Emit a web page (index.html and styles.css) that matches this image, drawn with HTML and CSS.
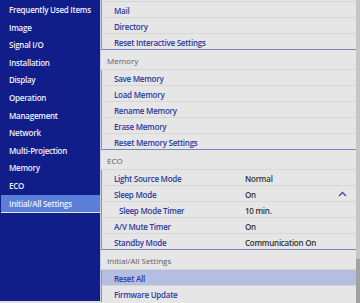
FILE: index.html
```html
<!DOCTYPE html>
<html lang="en">
<head>
  <meta charset="UTF-8">
  <title>Projector Menu</title>
  <link rel="stylesheet" href="styles.css">
</head>
<body>
<div class="menu">
  <div class="nav">
    <div class="nav-item">Frequently Used Items</div>
    <div class="nav-item">Image</div>
    <div class="nav-item">Signal I/O</div>
    <div class="nav-item">Installation</div>
    <div class="nav-item">Display</div>
    <div class="nav-item">Operation</div>
    <div class="nav-item">Management</div>
    <div class="nav-item">Network</div>
    <div class="nav-item">Multi-Projection</div>
    <div class="nav-item">Memory</div>
    <div class="nav-item">ECO</div>
    <div class="nav-item active">Initial/All Settings</div>
  </div>

  <div class="list">
    <div class="cut"></div>
    <div class="section">
      <div class="row">Mail</div>
      <div class="row">Directory</div>
      <div class="row">Reset Interactive Settings</div>
    </div>

    <div class="section">
      <div class="head">Memory</div>
      <div class="row">Save Memory</div>
      <div class="row">Load Memory</div>
      <div class="row">Rename Memory</div>
      <div class="row">Erase Memory</div>
      <div class="row">Reset Memory Settings</div>
    </div>

    <div class="section">
      <div class="head">ECO</div>
      <div class="row"><span class="label">Light Source Mode</span><span class="value">Normal</span></div>
      <div class="row"><span class="label">Sleep Mode</span><span class="value">On</span>
        <svg class="chev" width="9" height="6" viewBox="0 0 9 6"><path d="M1 5 L4.5 1.5 L8 5" fill="none" stroke="#3a4aa8" stroke-width="1.3"/></svg>
      </div>
      <div class="row sub"><span class="label">Sleep Mode Timer</span><span class="value">10 min.</span></div>
      <div class="row"><span class="label">A/V Mute Timer</span><span class="value">On</span></div>
      <div class="row"><span class="label">Standby Mode</span><span class="value">Communication On</span></div>
    </div>

    <div class="section last">
      <div class="head">Initial/All Settings</div>
      <div class="row selected">Reset All</div>
      <div class="row">Firmware Update</div>
    </div>
  </div>

  <div class="scroll">
    <div class="thumb"></div>
  </div>
</div>
</body>
</html>
```

FILE: styles.css
```css
body {
  margin: 0;
  background: #dcdcdc;
  font-family: "Open Sans", "Noto Sans", sans-serif;
  font-size: 8px;
  font-weight: 600;
  letter-spacing: -0.25px;
}

.menu {
  display: flex;
  width: 360px;
  height: 303px;
  overflow: hidden;
}

.nav {
  width: 100px;
  height: 301px;
  background: #111d88;
  border-right: 1px solid #c9cbe2;
}

.nav-item {
  height: 17.6px;
  line-height: 17.6px;
  padding-left: 9px;
  color: #eef0ff;
  white-space: nowrap;
}

.nav-item:first-child {
  margin-top: 1px;
}

.nav-item.active {
  background: #5a7fd6;
  border-bottom: 1px solid #e6e8f4;
  margin-left: 1px;
  padding-left: 8px;
}

.list {
  flex: 1;
  background: #e6e6e6;
}

.cut {
  height: 1px;
  border-bottom: 1px solid #d6d6d6;
  border-left: 1px solid #8a8fcb;
}

.section {
  border-bottom: 1px solid #7d82c2;
}

.section.last {
  border-bottom: none;
}

.head {
  height: 20px;
  line-height: 21px;
  padding-left: 6px;
  color: #5a5a5a;
  font-weight: 400;
  letter-spacing: 0;
  border-bottom: 1px solid #d6d6d6;
  box-sizing: border-box;
}

.row {
  display: flex;
  align-items: center;
  height: 16px;
  box-sizing: border-box;
  padding-left: 12px;
  padding-top: 1px;
  border-left: 1px solid #8a8fcb;
  border-bottom: 1px solid #d6d6d6;
  color: #2c3a9e;
  position: relative;
}

.section .row:last-child {
  border-bottom: none;
  height: 15px;
}

.section.last .row:last-child {
  height: 16px;
}

.row.sub {
  padding-left: 17px;
}

.row.sub .label {
  width: 126px;
}

.label {
  width: 131px;
}

.value {
  color: #333;
}

.row.selected {
  background: #b3bee1;
}

.chev {
  position: absolute;
  right: 9px;
  top: 5px;
}

.scroll {
  width: 4px;
  background: #c6c6c6;
  display: flex;
  flex-direction: column;
  justify-content: flex-end;
}

.thumb {
  height: 44px;
  background: #a2a2a2;
}
```
